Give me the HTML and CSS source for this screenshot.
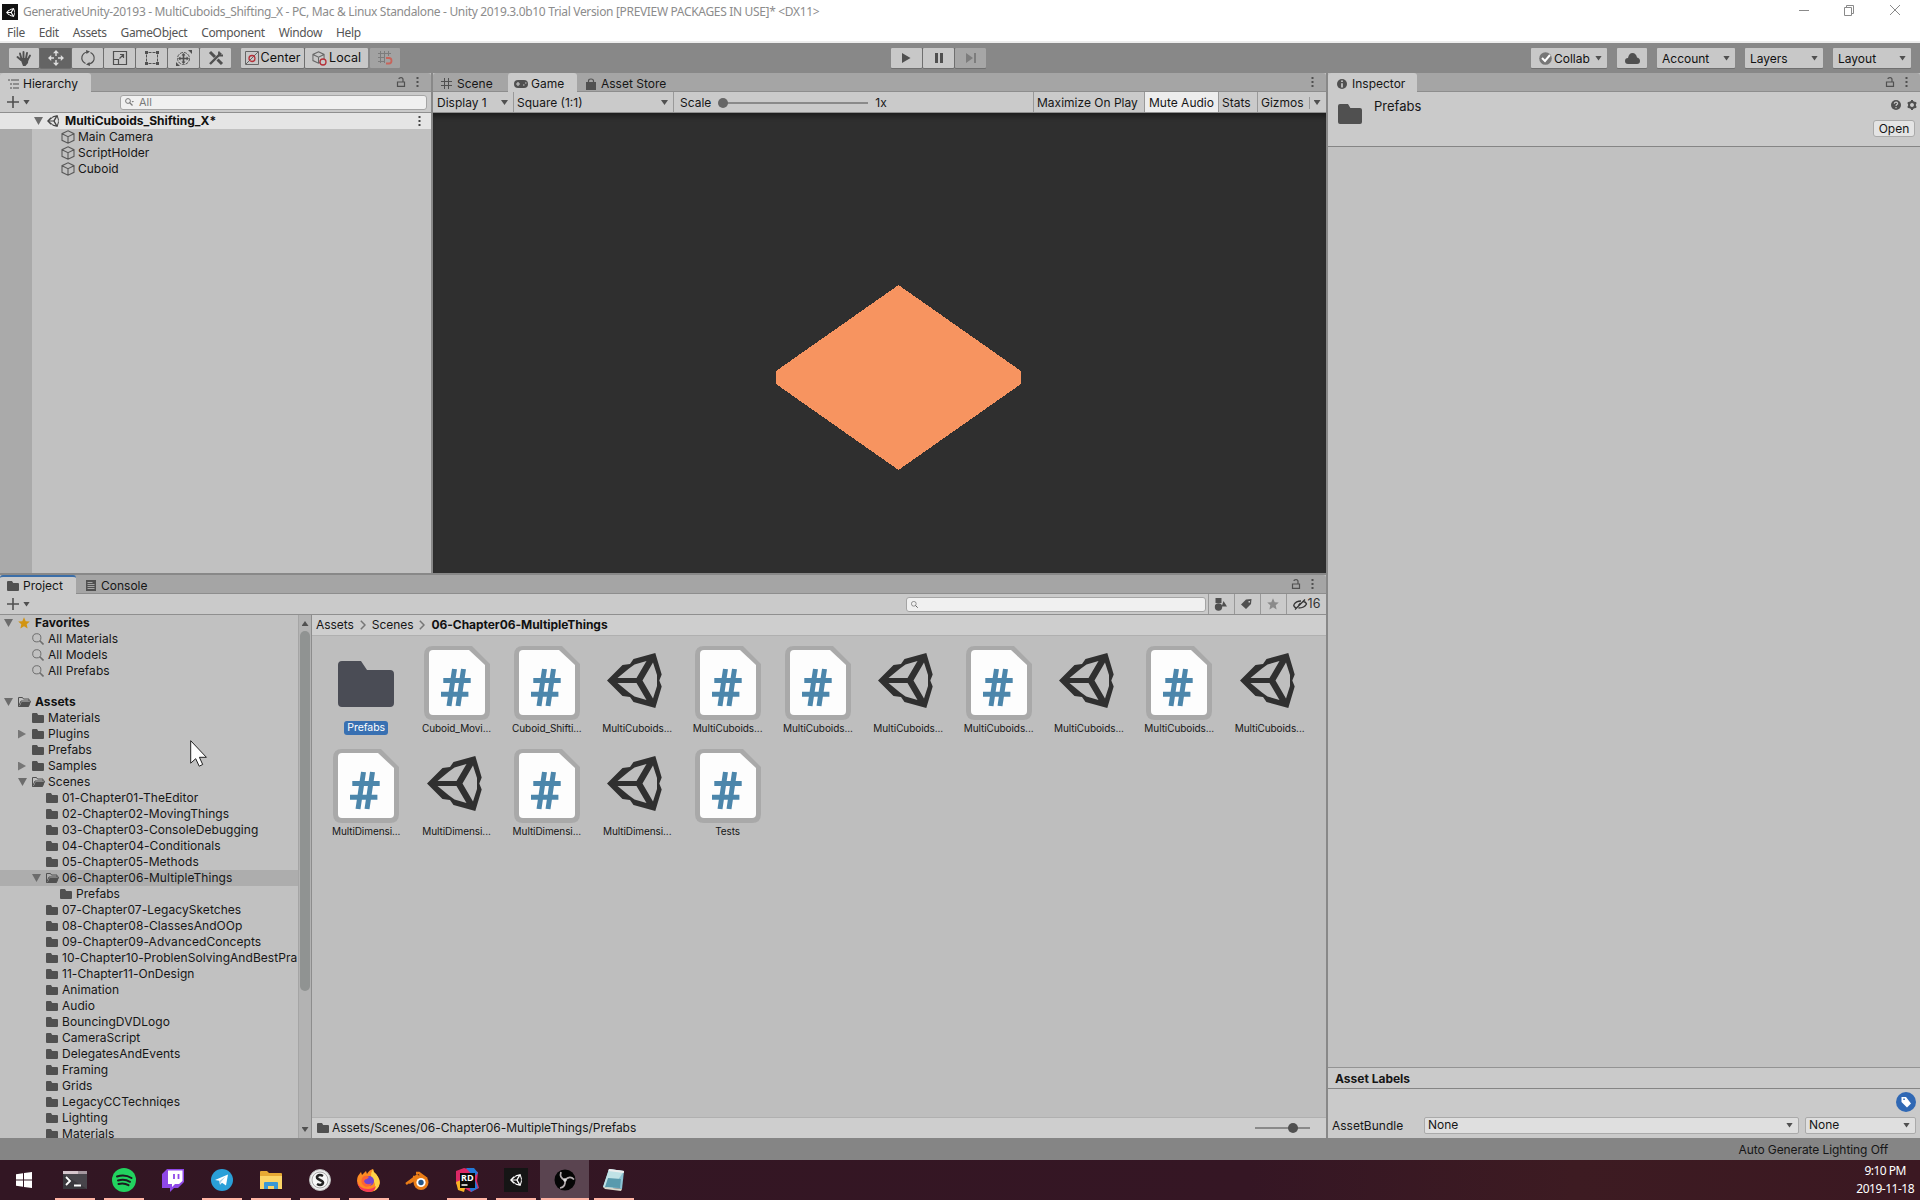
FILE: index.html
```html
<!DOCTYPE html>
<html lang="en">
<head>
<meta charset="utf-8">
<title>GenerativeUnity-20193 - Unity</title>
<link rel="stylesheet" href="styles.css">
</head>
<body>
<svg class="defs" aria-hidden="true">
  <symbol id="unity" viewBox="0 0 55 55"><path fill-rule="evenodd" d="M0 27.500 15.500 12l7.500-1 3.500-5L48.300 0l6.400 21.500L52.300 27.500l2.400 6L48.300 55 26.500 49 23 44l-7.500-1zM10.500 25H29.500L39.500 8 27.500 11.500 22 15.500zM10.500 30 22 39.500 27.500 43.500 39.500 47 29.500 30zM46 9.500 35.500 27.500 46 45.500 50 33 50 22z"/></symbol>
  <symbol id="folder" viewBox="0 0 12 10"><path d="M0 1q0-1 1-1h4l1.200 2H11q1 0 1 1v6q0 1-1 1H1q-1 0-1-1z"/></symbol>
  <symbol id="folder-open" viewBox="0 0 13 10"><path d="M.5 9.500V.5h4l1 1.500h5.500v2M.5 9.500 3 4h9.500l-2 5.500z" fill="none" stroke="currentColor"/><path d="M1.500 9.500 3.500 5h9L10.500 9.500z"/></symbol>
  <symbol id="cube" viewBox="0 0 14 14"><path d="M7 .8 13 3.700v6.600L7 13.200 1 10.300V3.700zM1 3.700l6 3 6-3M7 6.700v6.500" fill="none" stroke="currentColor" stroke-width="1.100"/></symbol>
  <symbol id="search" viewBox="0 0 12 12"><path d="m7.800 7.800 3.700 3.700" stroke="currentColor" stroke-width="1.600"/><circle cx="4.800" cy="4.800" r="4.100" fill="none" stroke="currentColor"/></symbol>
  <symbol id="lock" viewBox="0 0 10 10"><path d="M1.500 5h7v4.300h-7zM7 5V2.500Q7 .7 5 .7T3 2" fill="none" stroke="currentColor" stroke-width="1.200"/></symbol>
  <symbol id="dots" viewBox="0 0 3 10"><path d="M.5 0h2v2h-2zm0 4h2v2h-2zm0 4h2v2h-2z"/></symbol>
  <symbol id="plus" viewBox="0 0 12 12"><path d="M0 5.200h12v1.600H0zM5.200 0h1.600v12H5.200z"/></symbol>
  <symbol id="chevron" viewBox="0 0 6 10"><path d="M.8.800 5 5 .8 9.200" fill="none" stroke="#777" stroke-width="1.500"/></symbol>
  <symbol id="star" viewBox="0 0 12 12"><path d="m6 .3 1.700 3.900 4.100.4-3.100 2.700.9 4.200L6 9.300l-3.600 2.200.9-4.200L.2 4.600l4.100-.4z"/></symbol>
  <symbol id="script" viewBox="0 0 66 74"><path d="M9 0h39l18 18v47q0 9-9 9H9q-9 0-9-9V9q0-9 9-9z" fill="#a9a9a9"/><path d="M9 4h36l16 15v46q0 4-4 4H9q-4 0-4-4V8q0-4 4-4z" fill="#fdfdfd"/><path d="M30.500 23 25 60M39.500 23 34 60M19.300 34.500h27.400M17 48.300h27.400" stroke="#4c86ab" stroke-width="5" fill="none"/></symbol>
  <symbol id="move" viewBox="0 0 16 16"><path d="M8 0l3 3.200H5zM8 16l-3-3.200h6zM0 8l3.200-3v6zM16 8l-3.200 3V5z"/><path d="M8 2v4M8 10v4M2 8h4M10 8h4" stroke="currentColor" stroke-width="1.400"/></symbol>
</svg>

<header class="window-head">
  <div class="titlebar">
    <span class="app-icon"><svg width="9" height="9" fill="#fff"><use href="#unity"/></svg></span>
    <span class="title">GenerativeUnity-20193 - MultiCuboids_Shifting_X - PC, Mac &amp; Linux Standalone - Unity 2019.3.0b10 Trial Version [PREVIEW PACKAGES IN USE]* &lt;DX11&gt;</span>
    <svg class="win-controls" width="102" height="12" fill="none" stroke="#8a8a8a"><path d="M0 6.500h10M45.500 3.500h7v8h-7zM47.500 3.500v-2h7v8h-2M91 1l10 10M101 1 91 11"/></svg>
  </div>
  <nav class="menubar"><span>File</span><span>Edit</span><span>Assets</span><span>GameObject</span><span>Component</span><span>Window</span><span>Help</span></nav>
</header>

<div class="toolbar">
  <div class="group tools">
    <span class="btn"><svg width="14" height="15" viewBox="0 0 14 15"><path d="M4 9 .5 6M4.500 8 3 2.500M6.500 7V1M9 7.500 10 2M10.500 9l2.500-4.500" stroke="currentColor" stroke-width="1.900" stroke-linecap="round"/><path d="M3 7h8.500L11 12l-2.500 3H6z"/></svg></span>
    <span class="btn on"><svg width="16" height="16"><use href="#move"/></svg></span>
    <span class="btn"><svg width="16" height="16" viewBox="0 0 16 16"><path d="M5.500 13.500Q1 11 2 6.500 3 3 7 2M10.500 2.500Q15 5 14 9.500 13 13 9 14" fill="none" stroke="currentColor" stroke-width="1.200"/><path d="M6 0l4 1.500L6.500 4zM10 16l-4-1.500L9.500 12z"/></svg></span>
    <span class="btn"><svg width="14" height="14" viewBox="0 0 14 14" fill="none" stroke="currentColor"><path d="M.5.500h13v13H.5zM.5 8.500h5v5M6.500 7.500l4-4M7 3.500h3.500V7" stroke-width="1.200"/></svg></span>
    <span class="btn"><svg width="14" height="14" viewBox="0 0 14 14"><path d="M0 0h3v3H0zM11 0h3v3h-3zM0 11h3v3H0zM11 11h3v3h-3z"/><path d="M3.500 1.500h7M3.500 12.500h7M1.500 3.500v7M12.500 3.500v7" stroke="currentColor" stroke-dasharray="3 1"/></svg></span>
    <span class="btn"><svg width="16" height="16" viewBox="0 0 16 16"><circle cx="7.500" cy="8.500" r="6" fill="none" stroke="currentColor" stroke-dasharray="3 1"/><path d="M7.500 4v9M3 8.500h9" stroke="currentColor" stroke-width="1.600"/><path d="M7.500 3l2 2.500h-4zM7.500 14l-2-2.500h4zM2 8.500l2.500-2v4zM13 8.500l-2.500 2v-4zM12 0h4v4zM0 12v4h4z"/></svg></span>
    <span class="btn"><svg width="16" height="16" viewBox="0 0 16 16" stroke="currentColor" fill="none"><path d="M2 2l5 5M9.500 9.500 14 14" stroke-width="3"/><path d="M2 14 13 3" stroke-width="2.400"/><path d="M11 1.500v4h4" stroke-width="1.800"/></svg></span>
  </div>
  <div class="group pivots">
    <span class="btn pivot"><svg width="14" height="14" viewBox="0 0 14 14" fill="none"><path d="M.5.500h13v13H.5zM1 13 13 1" stroke="#666"/><circle cx="7" cy="7.500" r="3" stroke="#b53038" stroke-width="1.300"/></svg>Center</span>
    <span class="btn pivot"><svg width="15" height="15" viewBox="0 0 15 15"><use href="#cube" width="13" height="13"/><circle cx="11" cy="11" r="3" fill="#c8c8c8" stroke="#b53038" stroke-width="1.300"/></svg>Local</span>
  </div>
  <span class="btn snap"><svg width="14" height="14" viewBox="0 0 14 14" fill="none"><path d="M2.500 0v12M6.500 0v12M10.500 0v5M0 2.500h13M0 6.500h7M0 10.500h6" stroke="#7c7c7c"/><path d="M8 7h3q2.500 0 2.500 2.700T11 12.500H8" stroke="#c8645a" stroke-width="1.800"/></svg></span>
  <div class="group play">
    <span class="btn"><svg width="9" height="10"><path d="M0 0l8.500 5L0 10z"/></svg></span>
    <span class="btn"><svg width="8" height="10"><path d="M0 0h3v10H0zM5 0h3v10H5z"/></svg></span>
    <span class="btn dis"><svg width="10" height="10"><path d="M0 0l7 5-7 5zM8 0h2v10H8z"/></svg></span>
  </div>
  <div class="account">
    <span class="btn drop collab"><svg width="13" height="13" viewBox="0 0 13 13"><circle cx="6.500" cy="6.500" r="6.300" fill="#777"/><path d="m3 6 3 3 5-6" fill="none" stroke="#fff" stroke-width="2"/></svg><b>Collab</b><i class="tri"></i></span>
    <span class="btn cloud"><svg width="15" height="11" viewBox="0 0 15 11"><path d="M3 11q-3 0-3-3t3-3Q4 0 7.500 0T12 4.500q3 .5 3 3.500t-3 3z"/></svg></span>
    <span class="btn drop"><b>Account</b><i class="tri"></i></span>
    <span class="btn drop"><b>Layers</b><i class="tri"></i></span>
    <span class="btn drop"><b>Layout</b><i class="tri"></i></span>
  </div>
</div>

<main class="editor">
  <div class="left-area">
    <div class="top-area">
      <section class="panel hierarchy">
        <div class="tabs">
          <span class="tab active"><svg width="11" height="10" viewBox="0 0 11 10"><path d="M0 1h2M3 1h8M2 5h2M5 5h6M2 9h2M5 9h6" stroke="currentColor" stroke-width="1.200"/></svg>Hierarchy</span>
          <span class="tab-tools"><svg width="10" height="10"><use href="#lock"/></svg><svg width="3" height="10"><use href="#dots"/></svg></span>
        </div>
        <div class="bar"><svg class="add" width="12" height="12"><use href="#plus"/></svg><i class="tri"></i>
          <span class="field all"><svg width="9" height="8" viewBox="0 0 9 8"><circle cx="3" cy="3" r="2.400" fill="none" stroke="currentColor"/><path d="m4.500 4.500 3 3" stroke="currentColor" stroke-width="1.300"/><path d="M6.500 3H9L7.800 4.500z"/></svg>All</span>
        </div>
        <div class="scene-row"><i class="tri big"></i><svg width="12" height="12"><use href="#unity"/></svg><strong>MultiCuboids_Shifting_X*</strong><svg class="menu" width="3" height="10"><use href="#dots"/></svg></div>
        <div class="objects">
          <div><svg width="14" height="14"><use href="#cube"/></svg>Main Camera</div>
          <div><svg width="14" height="14"><use href="#cube"/></svg>ScriptHolder</div>
          <div><svg width="14" height="14"><use href="#cube"/></svg>Cuboid</div>
        </div>
      </section>
      <section class="panel game">
        <div class="tabs">
          <span class="tab scene-tab"><svg width="11" height="11" viewBox="0 0 11 11"><path d="M3.500 0v11M7.500 0v11M0 3.500h11M0 7.500h11" stroke="currentColor"/></svg>Scene</span>
          <span class="tab active game-tab"><svg width="14" height="8" viewBox="0 0 14 8"><rect width="14" height="8" rx="4"/><path d="M2 4h4M4 2v4M9 5h1.500M11 3h1.500" stroke="#c8c8c8" stroke-width="1.200"/></svg>Game</span>
          <span class="tab store-tab"><svg width="10" height="12" viewBox="0 0 10 12"><path d="M0 4h10v8H0z"/><path d="M2.500 5V3q0-2 2.500-2t2.500 2v2" fill="none" stroke="currentColor" stroke-width="1.200"/></svg>Asset Store</span>
          <span class="tab-tools"><svg width="3" height="10"><use href="#dots"/></svg></span>
        </div>
        <div class="bar game-bar">
          <span class="cell display">Display 1<i class="tri"></i></span>
          <span class="cell aspect">Square (1:1)<i class="tri"></i></span>
          <span class="scale">Scale<svg width="150" height="10"><path d="M5 5h145" stroke="#8a8a8a" stroke-width="2"/><circle cx="5" cy="5" r="5"/></svg>1x</span>
          <span class="opt maximize">Maximize On Play</span><span class="opt mute">Mute Audio</span><span class="opt stats">Stats</span><span class="opt gizmos">Gizmos<em></em><i class="tri"></i></span>
        </div>
        <div class="viewport"><svg width="893" height="460" viewBox="433 113 893 460"><path d="M898.500 285 1021 371v13l-122.500 86L776 384v-13z" fill="#f79460" shape-rendering="crispEdges"/></svg></div>
      </section>
    </div>
    <section class="panel project">
      <div class="tabs">
        <span class="tab active project-tab"><svg width="12" height="10"><use href="#folder"/></svg>Project</span>
        <span class="tab console-tab"><svg width="10" height="11" viewBox="0 0 10 11"><path d="M0 0h10v11H0z"/><path d="M1.500 2.500h5M1.500 4.500h7M1.500 6.500h7M1.500 8.500h7" stroke="#a5a5a5"/></svg>Console</span>
        <span class="tab-tools"><svg width="10" height="10"><use href="#lock"/></svg><svg width="3" height="10"><use href="#dots"/></svg></span>
      </div>
      <div class="bar project-bar"><svg class="add" width="12" height="12"><use href="#plus"/></svg><i class="tri"></i>
        <span class="field find"><svg width="7" height="7"><use href="#search"/></svg></span>
        <span class="filter"><svg width="13" height="13" viewBox="0 0 13 13"><path d="M1.500 0h6v5h-6zM8 7.500 9.500 3l3.500 5.500H8z"/><circle cx="4.500" cy="9" r="3.700"/></svg></span>
        <span class="filter"><svg width="11" height="10" viewBox="0 0 11 10"><path fill-rule="evenodd" d="m0 5.500 5-5L10.500 0 10 5 5 10zM7.500 2v1.500H9V2z"/></svg></span>
        <span class="filter faint"><svg width="12" height="12"><use href="#star"/></svg></span>
        <span class="filter hidden-count"><svg width="14" height="11" viewBox="0 0 14 11" fill="none" stroke="currentColor"><path d="M3 9Q0 7 1 5.500 3 2 8 2M10.500 2.500q2.500.5 3 2.500-2 4-8 4M2 10.500 12 .5M5.500 6.500 7.500 4" stroke-width="1.300"/></svg>16</span>
      </div>
      <div class="project-body">
        <div class="tree">
          <div class="row fav"><i class="tri big"></i><svg class="gold" width="12" height="12"><use href="#star"/></svg><strong>Favorites</strong></div>
          <div class="row q"><svg width="12" height="12"><use href="#search"/></svg>All Materials</div>
          <div class="row q"><svg width="12" height="12"><use href="#search"/></svg>All Models</div>
          <div class="row q"><svg width="12" height="12"><use href="#search"/></svg>All Prefabs</div>
          <div class="row assets"><i class="tri big"></i><svg width="13" height="10"><use href="#folder-open"/></svg><strong>Assets</strong></div>
          <div class="row l1"><svg width="12" height="10"><use href="#folder"/></svg>Materials</div>
          <div class="row l1 has"><i class="tri side"></i><svg width="12" height="10"><use href="#folder"/></svg>Plugins</div>
          <div class="row l1"><svg width="12" height="10"><use href="#folder"/></svg>Prefabs</div>
          <div class="row l1 has"><i class="tri side"></i><svg width="12" height="10"><use href="#folder"/></svg>Samples</div>
          <div class="row l1 has"><i class="tri big"></i><svg width="13" height="10"><use href="#folder-open"/></svg><span class="tight">Scenes</span></div>
          <div class="row l2"><svg width="12" height="10"><use href="#folder"/></svg>01-Chapter01-TheEditor</div>
          <div class="row l2"><svg width="12" height="10"><use href="#folder"/></svg>02-Chapter02-MovingThings</div>
          <div class="row l2"><svg width="12" height="10"><use href="#folder"/></svg>03-Chapter03-ConsoleDebugging</div>
          <div class="row l2"><svg width="12" height="10"><use href="#folder"/></svg>04-Chapter04-Conditionals</div>
          <div class="row l2"><svg width="12" height="10"><use href="#folder"/></svg>05-Chapter05-Methods</div>
          <div class="row l2 has selected"><i class="tri big"></i><svg width="13" height="10"><use href="#folder-open"/></svg><span class="tight">06-Chapter06-MultipleThings</span></div>
          <div class="row l3"><svg width="12" height="10"><use href="#folder"/></svg>Prefabs</div>
          <div class="row l2"><svg width="12" height="10"><use href="#folder"/></svg>07-Chapter07-LegacySketches</div>
          <div class="row l2"><svg width="12" height="10"><use href="#folder"/></svg>08-Chapter08-ClassesAndOOp</div>
          <div class="row l2"><svg width="12" height="10"><use href="#folder"/></svg>09-Chapter09-AdvancedConcepts</div>
          <div class="row l2"><svg width="12" height="10"><use href="#folder"/></svg>10-Chapter10-ProblenSolvingAndBestPra</div>
          <div class="row l2"><svg width="12" height="10"><use href="#folder"/></svg>11-Chapter11-OnDesign</div>
          <div class="row l2"><svg width="12" height="10"><use href="#folder"/></svg>Animation</div>
          <div class="row l2"><svg width="12" height="10"><use href="#folder"/></svg>Audio</div>
          <div class="row l2"><svg width="12" height="10"><use href="#folder"/></svg>BouncingDVDLogo</div>
          <div class="row l2"><svg width="12" height="10"><use href="#folder"/></svg>CameraScript</div>
          <div class="row l2"><svg width="12" height="10"><use href="#folder"/></svg>DelegatesAndEvents</div>
          <div class="row l2"><svg width="12" height="10"><use href="#folder"/></svg>Framing</div>
          <div class="row l2"><svg width="12" height="10"><use href="#folder"/></svg>Grids</div>
          <div class="row l2"><svg width="12" height="10"><use href="#folder"/></svg>LegacyCCTechniqes</div>
          <div class="row l2"><svg width="12" height="10"><use href="#folder"/></svg>Lighting</div>
          <div class="row l2"><svg width="12" height="10"><use href="#folder"/></svg>Materials</div>
        </div>
        <div class="scrollbar"><i class="tri up"></i><div class="thumb"></div><i class="tri"></i></div>
        <div class="browser">
          <div class="crumbs"><span>Assets</span><svg width="6" height="10"><use href="#chevron"/></svg><span>Scenes</span><svg width="6" height="10"><use href="#chevron"/></svg><strong>06-Chapter06-MultipleThings</strong></div>
          <div class="grid">
            <div class="item"><svg class="big-folder" width="56" height="46" viewBox="0 0 56 46"><path d="M0 4q0-4 4-4h19l6 9h23q4 0 4 4v29q0 4-4 4H4q-4 0-4-4z" fill="#4a4c55"/></svg><span class="picked">Prefabs</span></div>
            <div class="item"><svg class="doc"><use href="#script"/></svg><span>Cuboid_Movi...</span></div>
            <div class="item"><svg class="doc"><use href="#script"/></svg><span>Cuboid_Shifti...</span></div>
            <div class="item"><svg class="logo"><use href="#unity"/></svg><span>MultiCuboids...</span></div>
            <div class="item"><svg class="doc"><use href="#script"/></svg><span>MultiCuboids...</span></div>
            <div class="item"><svg class="doc"><use href="#script"/></svg><span>MultiCuboids...</span></div>
            <div class="item"><svg class="logo"><use href="#unity"/></svg><span>MultiCuboids...</span></div>
            <div class="item"><svg class="doc"><use href="#script"/></svg><span>MultiCuboids...</span></div>
            <div class="item"><svg class="logo"><use href="#unity"/></svg><span>MultiCuboids...</span></div>
            <div class="item"><svg class="doc"><use href="#script"/></svg><span>MultiCuboids...</span></div>
            <div class="item"><svg class="logo"><use href="#unity"/></svg><span>MultiCuboids...</span></div>
            <div class="item"><svg class="doc"><use href="#script"/></svg><span>MultiDimensi...</span></div>
            <div class="item"><svg class="logo"><use href="#unity"/></svg><span>MultiDimensi...</span></div>
            <div class="item"><svg class="doc"><use href="#script"/></svg><span>MultiDimensi...</span></div>
            <div class="item"><svg class="logo"><use href="#unity"/></svg><span>MultiDimensi...</span></div>
            <div class="item"><svg class="doc"><use href="#script"/></svg><span>Tests</span></div>
          </div>
          <div class="path"><svg width="12" height="10"><use href="#folder"/></svg>Assets/Scenes/06-Chapter06-MultipleThings/Prefabs<svg class="zoomer" width="55" height="10"><path d="M0 5h55" stroke="#8a8a8a" stroke-width="2"/><circle cx="38" cy="5" r="5"/></svg></div>
        </div>
      </div>
    </section>
  </div>
  <aside class="panel inspector">
    <div class="tabs">
      <span class="tab active"><svg width="10" height="10" viewBox="0 0 10 10"><circle cx="5" cy="5" r="5"/><path d="M5 1.500v1.600M5 4.200v4.300" stroke="#c8c8c8" stroke-width="1.700"/></svg>Inspector</span>
      <span class="tab-tools"><svg width="10" height="10"><use href="#lock"/></svg><svg width="3" height="10"><use href="#dots"/></svg></span>
    </div>
    <div class="asset-head">
      <svg class="asset-icon" width="24" height="20"><use href="#folder"/></svg><span class="asset-name">Prefabs</span>
      <div class="asset-actions">
        <div class="mini"><svg width="10" height="10" viewBox="0 0 10 10"><circle cx="5" cy="5" r="5"/><path d="M3.300 3.800Q3.500 2 5.200 2.200 7 2.500 6.500 4 5 4.700 5 6M5 7v1.300" stroke="#c8c8c8" stroke-width="1.200" fill="none"/></svg><svg width="10" height="10" viewBox="0 0 10 10"><circle cx="5" cy="5" r="3" fill="none" stroke="currentColor" stroke-width="2"/><path d="M5 0v2.500M5 7.500V10M.7 2.500 3 3.800M7 6.200l2.300 1.300M.7 7.500 3 6.200M7 3.800l2.300-1.300" stroke="currentColor" stroke-width="2"/></svg></div>
        <span class="open">Open</span>
      </div>
    </div>
    <div class="inspector-body"></div>
    <div class="labels-title">Asset Labels</div>
    <div class="labels-body">
      <svg class="tag" width="20" height="20" viewBox="0 0 20 20"><circle cx="10" cy="10" r="10" fill="#3068b4"/><path fill-rule="evenodd" d="M5.500 5h4.500l5 6.500-4 4L5.500 10zM7.300 6.500v1.500h1.500V6.500z" fill="#fff"/></svg>
      <div class="bundle"><span>AssetBundle</span><span class="select wide">None<i class="tri"></i></span><span class="select">None<i class="tri"></i></span></div>
    </div>
  </aside>
</main>
<div class="status">Auto Generate Lighting Off</div>

<footer class="taskbar">
  <span class="app plain"><svg width="16" height="16" viewBox="0 0 16 16" fill="#fff"><path d="M0 2.200 7 1.200v6.300H0zM8 1l8-1v7.500H8zM0 8.500h7v6.300l-7-1zM8 8.500h8V16l-8-1z"/></svg></span>
  <span class="app run"><svg width="24" height="18" viewBox="0 0 24 18"><path d="M0 0h24v18H0z" fill="#48454b"/><path d="M0 0h24v3H0z" fill="#a5979f"/><path d="M0 0h15v3H0z" fill="#d5c5cc"/><path d="M0 3 24 18H0z" fill="#3a383d"/><path d="m3 6 4 4-4 4M11 14.500h7" fill="none" stroke="#fff" stroke-width="1.800"/></svg></span>
  <span class="app run"><svg width="24" height="24" viewBox="0 0 24 24"><circle cx="12" cy="12" r="12" fill="#22d35f"/><path d="M5 8.500q8-2.500 14.500 1.500M6 12.500q6.500-2 12 1.300M6.500 16q5.500-1.500 10 1.200" fill="none" stroke="#1c1b20" stroke-width="2" stroke-linecap="round"/></svg></span>
  <span class="app"><svg width="22" height="23" viewBox="0 0 22 23"><path d="M0 5 5 0h17v13l-6 6h-4l-4 4v-4H0z" fill="#8f48e8"/><path d="M6 1.500h14.500V12L17 15h-4l-3 3v-3H6z" fill="#fff"/><path d="M12 5v5M16.500 5v5" stroke="#8f48e8" stroke-width="1.800"/></svg></span>
  <span class="app run"><svg width="22" height="22" viewBox="0 0 22 22"><circle cx="11" cy="11" r="11" fill="#2a9fd8"/><path d="m4 11 13-5.500-2 11-4-2.700-2 2-.8-4z" fill="#fff"/><path d="m8.500 12 6-4.500-4.500 5.500-1 2.500z" fill="#a7cfe5"/></svg></span>
  <span class="app run explorer"><svg width="22" height="18" viewBox="0 0 22 18"><path d="M0 1q0-1 1-1h6l2 2h12q1 0 1 1v14H0z" fill="#e6a934"/><path d="M0 5h22v13H0z" fill="#fbd567"/><path d="M4 18v-6q0-1 1-1h12q1 0 1 1v6h-4v-3H8v3z" fill="#3a98d5"/></svg></span>
  <span class="app run"><svg width="22" height="22" viewBox="0 0 22 22"><circle cx="11" cy="11" r="10.500" fill="#eee" stroke="#bbb"/><circle cx="11" cy="11" r="8" fill="#f8f8f8" stroke="#aaa"/><path d="M14 7Q10.500 5 8.500 7t2.500 4 2.500 4-5.500 0" fill="none" stroke="#222" stroke-width="2.500"/></svg></span>
  <span class="app run"><svg width="23" height="23" viewBox="0 0 23 23"><path d="M1 7 4 3l1 3 4-4 1 3Q12 1 16 0q0 3 3 5 4 5 4 9-2 9-11.500 9Q1 22 0 12q0-3 1-5z" fill="#ff8b22"/><path d="M16 0q0 3 3 5 5 6 3 12-2 4-5 5 3-8-3-14 0-5 2-8z" fill="#ffd347"/><path d="M0 12q2 8 11 8 5 0 8-3-1 6-8 6Q1 22 0 12z" fill="#f53b58"/><circle cx="12" cy="12" r="5" fill="#7344cf"/><path d="M5 9q3-4 7-1l-2 2q-3 0-3 3 3 4 8 1-3 5-7 3.500Q3 15 5 9z" fill="#ff6335"/></svg></span>
  <span class="app"><svg width="23" height="19" viewBox="0 0 23 19"><path d="M10 2h3l8 6M7 6h8M0 13l12-9M3 12l7-4" stroke="#ea7d17" stroke-width="2.500" fill="none"/><circle cx="15" cy="11.500" r="7.500" fill="#ea7d17"/><circle cx="15" cy="11.500" r="4.600" fill="#fff"/><circle cx="15" cy="11.500" r="2.700" fill="#265787"/></svg></span>
  <span class="app run"><svg width="24" height="24" viewBox="0 0 24 24"><path d="M1 3 9 0l8 2 6 2-1 9 2 7-8 4-7-4-8-4z" fill="#dc2866"/><path d="M11 0h8l4 5-4 4z" fill="#2279d8"/><path d="m1 14 5-2 5 5-2 7-6-2z" fill="#f7b323"/><path d="m14 18 6-6 3 8-7 4z" fill="#2179d7"/><path d="M5 5h15v15H5z" fill="#090909"/><path d="M6.500 17h6" stroke="#fff" stroke-width="1.500"/><text x="6" y="13" class="rd">RD</text></svg></span>
  <span class="app run"><svg width="24" height="24"><path d="M0 0h24v24H0z" fill="#151515"/><use href="#unity" x="6" y="6" width="12" height="12" fill="#fff"/></svg></span>
  <span class="app run active"><svg width="22" height="22" viewBox="0 0 22 22"><circle cx="11" cy="11" r="10.500" fill="#050505"/><path d="M11 11Q5 9 7 3M11 11q5-5 9-.5M11 11q1 7-5 8" fill="none" stroke="#b5aeb1" stroke-width="1.700"/><circle cx="11" cy="11" r="1.800" fill="#ddd"/></svg></span>
  <span class="app run"><svg width="22" height="22" viewBox="0 0 22 22"><path d="m6 0 15 2-2 18L0 18z" fill="#8bc2d3"/><path d="M6 0 21 2 9 20 0 18z" fill="#c0e2e6"/><path d="m5 9 13 1-1 9-15-1z" fill="#599aad"/><path d="m6 0 15 2-.2 2L5.500 2z" fill="#eee"/><path d="m0 18 19 2-1 2L2 20z" fill="#d8d8cb"/></svg></span>
  <div class="clock"><span>9:10 PM</span><span>2019-11-18</span></div>
</footer>
<svg class="cursor" width="18" height="27" viewBox="0 0 18 27"><path d="M.7.700v22.500l5-4.500 3.500 7.500 3.500-1.700-3.300-7.200h7z" fill="#fff" stroke="#222"/></svg>
</body>
</html>
```
FILE: styles.css
```css
* { box-sizing: border-box; }
body { margin: 0; width: 1920px; height: 1200px; overflow: hidden; display: flex; flex-direction: column; background: #888; color: #161616; font: 12px/16px Inter, sans-serif; white-space: nowrap; }
svg { display: block; flex: none; overflow: visible; }
svg:not([fill]) { fill: currentColor; }
.defs { position: absolute; width: 0; height: 0; }
strong { font-weight: 700; color: #111; }

/* window frame */
.window-head { height: 43px; background: #fff; border-bottom: 2px solid #ededed; font-family: "Noto Sans", sans-serif; letter-spacing: -0.330px; flex: none; }
.titlebar { height: 23px; display: flex; align-items: center; padding: 1px 19px 0 2px; color: #8c8c8c; }
.app-icon { width: 16px; height: 16px; background: #111; display: grid; place-items: center; margin-right: 5px; }
.win-controls { margin: -4px 0 0 auto; }
.menubar { display: flex; gap: 13.800px; padding: 2px 7px; height: 18px; line-height: 16px; color: #555; }

/* main toolbar */
.toolbar { height: 30px; display: flex; align-items: center; padding: 0 9px; flex: none; }
.group { display: flex; gap: 1px; background: #6f6f6f; }
.btn { height: 20px; width: 31px; background: #c8c8c8; display: flex; align-items: center; justify-content: center; color: #505050; border-radius: 1px; box-shadow: 0 1px 0 #707070; }
.btn.on { background: #646464; color: #dedede; }
.tools .btn:first-child { width: 30px; }
.pivots { margin-left: 10px; }
.btn.pivot { width: 63px; gap: 2px; color: #111; font-size: 12.500px; }
.pivot svg { color: #666; }
.snap { margin-left: 2px; width: 30px; background: #a2a2a2; box-shadow: none; }
.play { margin-left: 491px; }
.btn.dis { background: #a6a6a6; color: #7d7d7d; }
.account { margin-left: auto; display: flex; gap: 10px; }
.btn.drop { width: 78px; padding: 0 5px; color: #111; justify-content: flex-start; }
.drop b { font-weight: 400; padding-top: 1px; }
.drop .tri { margin-left: auto; }
.btn.collab { width: 76px; padding-left: 8px; gap: 2px; }
.btn.cloud { width: 30px; }
.tri { width: 7px; height: 5px; background: #505050; clip-path: polygon(0 0, 100% 0, 50% 100%); flex: none; }
.tri.big { width: 9px; height: 8px; background: #6c6c6c; }
.tri.side { width: 8px; height: 9px; background: #777; clip-path: polygon(0 0, 100% 50%, 0 100%); }
.tri.up { clip-path: polygon(50% 0, 100% 100%, 0 100%); }

/* panels */
.editor { height: 1065px; display: flex; gap: 2px; flex: none; }
.left-area { width: 1326px; display: flex; flex-direction: column; gap: 2px; }
.top-area { height: 500px; display: flex; gap: 2px; }
.panel { display: flex; flex-direction: column; background: #c1c1c1; overflow: hidden; }
.hierarchy { width: 431px; }
.game { width: 893px; }
.tabs { height: 19px; background: #a5a5a5; border-bottom: 1px solid #8d8d8d; display: flex; flex: none; border-radius: 3px 3px 0 0; }
.tab { height: 19px; display: flex; align-items: center; padding: 2px 0 0 8px; }
.tab svg, .tab-tools, .bar > svg { color: #505050; }
.tab.active { background: #cacaca; border-radius: 3px 3px 0 0; }
.hierarchy .tab { width: 91px; gap: 4px; }
.tab-tools { margin-left: auto; display: flex; align-items: center; gap: 10px; padding-right: 12px; }
.bar { height: 21px; background: #cacaca; border-bottom: 1px solid #8f8f8f; display: flex; align-items: center; flex: none; }
.add { margin: 0 5px 0 7px; }
.bar > .add + .tri { margin-left: -1px; }
.field { height: 15px; background: #f0f0f0; border: 1px solid #a5a5a5; border-radius: 3px; display: flex; align-items: center; color: #555; }
.all { width: 307px; margin-left: 90px; padding-left: 4px; gap: 5px; font-size: 11px; color: #7a7a7a; }
.scene-row { height: 16px; background: #e5e5e5; display: flex; align-items: center; padding: 0 11px 0 34px; flex: none; }
.scene-row svg { color: #444; margin: 0 6px 0 4px; }
.scene-row .menu { margin: 0 -1px 0 auto; }
.objects { flex: 1; border-left: 32px solid #aaa; }
.objects div { display: flex; align-items: center; gap: 3px; height: 16px; padding-left: 29px; }
.objects svg { color: #5a5a5a; }
.scene-tab { width: 75px; gap: 5px; }
.game-tab { width: 69px; gap: 3px; padding-left: 6px; }
.store-tab { gap: 5px; padding-left: 9px; }
.game-bar > span { height: 20px; display: flex; align-items: center; padding-top: 1px; }
.cell { border-right: 1px solid #999; padding: 0 5px 0 4px; justify-content: space-between; }
.game-bar .aspect { padding-left: 3px; }
.display { width: 81px; }
.aspect { width: 160px; }
.scale { padding-left: 6px; gap: 7px; width: 359px; }
.scale svg { color: #666; }
.opt { border-left: 1px solid #999; padding-left: 3px; }
.maximize { width: 111px; }
.mute { width: 74px; background: #ededed; padding-left: 4px; }
.stats { width: 39px; }
.gizmos { flex: 1; gap: 5px; }
.gizmos em { width: 1px; height: 12px; background: #999; }
.gizmos .tri { margin-left: -1px; }
.viewport { height: 460px; background: #2f2f2f; box-shadow: inset 0 6px 5px -3px #1d1d1d; }

/* project panel */
.project { flex: 1; }
.project-tab { width: 76px; gap: 4px; padding-left: 7px; border-top: 2px solid #3b6ea8; padding-top: 0; }
.console-tab { padding-left: 10px; gap: 5px; }
.find { width: 300px; margin-left: 876px; padding-left: 4px; }
.filter { width: 26px; height: 20px; border-left: 1px solid #999; display: flex; align-items: center; justify-content: center; color: #505050; padding-right: 2px; }
.find + .filter { margin-left: 2px; }
.filter.faint { color: #8a8a8a; }
.filter.hidden-count { width: 40px; font-size: 12.500px; gap: 1px; padding-right: 0; color: #333; }
.project-body { flex: 1; display: flex; min-height: 0; }
.tree { width: 298px; overflow: hidden; letter-spacing: 0.050px; }
.row { height: 16px; display: flex; align-items: center; gap: 4px; }
.row svg { color: #505050; }
.row .gold { color: #d29412; }
.fav { padding-left: 4px; gap: 5px; }
.assets { margin-top: 15px; padding-left: 4px; gap: 4.500px; }
.q { padding-left: 32px; }
.row.q svg { color: #6e6e6e; }
.l1 { padding-left: 32px; }
.l1.has { padding-left: 18px; }
.l2 { padding-left: 46px; }
.l2.has { padding-left: 32px; }
.l3 { padding-left: 60px; }
.tight { margin-left: -1px; }
.has .tri { margin-right: 1px; }
.has .side { margin-right: 2px; }
.selected { background: #adadad; }
.scrollbar { width: 14px; background: #b3b3b3; border-left: 1px solid #a5a5a5; border-right: 1px solid #8d8d8d; display: flex; flex-direction: column; align-items: center; padding: 6px 0; }
.thumb { width: 10px; height: 360px; border-radius: 5px; background: #909392; margin: 5px 0 auto; flex: none; }
.browser { flex: 1; display: flex; flex-direction: column; background: #bebebe; }
.crumbs { height: 21px; display: flex; align-items: center; background: #cecece; border-bottom: 1px solid #b0b0b0; padding-left: 4px; gap: 6px; letter-spacing: -0.050px; flex: none; }
.grid { flex: 1; display: grid; grid-template-columns: repeat(11, 90.350px); grid-auto-rows: 103px; padding: 10px 0 0 9px; }
.item { display: grid; grid-template-rows: 75px 14px; justify-items: center; align-items: center; font-size: 10px; line-height: 14px; letter-spacing: -0.080px; }
.doc { width: 66px; height: 74px; margin: -2px 0 0 0; }
.logo { width: 55px; height: 55px; margin: -6px 5px 0 0; color: #303030; }
.item .picked { background: #3870b2; color: #fff; border-radius: 3px; padding: 0 3px; font-size: 10.500px; }
.path { height: 21px; background: #cecece; border-top: 1px solid #b0b0b0; display: flex; align-items: center; padding: 0 16px 0 5px; gap: 3px; letter-spacing: -0.030px; flex: none; }
.path svg { color: #505050; }
.zoomer { margin-left: auto; }

/* inspector */
.inspector { width: 592px; }
.inspector .tab { width: 89px; gap: 5px; padding-left: 9px; }
.asset-head { height: 55px; background: #cacaca; border-bottom: 1px solid #858585; display: flex; padding: 12px 5px 0 10px; flex: none; }
.asset-icon { color: #505050; }
.asset-name { margin: -6px 0 0 12px; font-size: 13px; }
.asset-actions { margin-left: auto; display: flex; flex-direction: column; align-items: flex-end; gap: 10px; margin-top: -4px; color: #505050; }
.mini { display: flex; gap: 6px; margin-right: -2px; }
.open { width: 42px; height: 17px; border: 1px solid #aaa; border-radius: 3px; background: #e4e4e4; text-align: center; line-height: 16px; color: #161616; }
.inspector-body { flex: 1; }
.labels-title { height: 22px; border-top: 1px solid #939393; border-bottom: 1px solid #858585; background: #cacaca; font-weight: 700; padding: 3px 7px; }
.labels-body { height: 49px; background: #cacaca; padding: 3px 4px 0; }
.tag { margin-left: auto; }
.bundle { display: flex; align-items: center; gap: 6px; margin-top: 4px; }
.bundle > span:first-child { width: 86px; padding-top: 2px; }
.select { width: 111px; height: 17px; background: #dfdfdf; border: 1px solid #aaa; border-radius: 2px; display: flex; align-items: center; justify-content: space-between; padding: 0 5px 0 3px; }
.select.wide { width: 375px; }
.status { height: 22px; flex: none; text-align: right; padding: 4px 32px 0 0; background: #858585; letter-spacing: -0.080px; }

/* desktop taskbar */
.taskbar { height: 40px; flex: none; display: flex; background: linear-gradient(90deg, #321623 0, #351624 65%, #3d1b22 82%, #3b1822 100%); }
.app { width: 49px; display: flex; align-items: center; justify-content: center; }
.app.plain { width: 50px; padding-right: 2px; }
.app.run { background: linear-gradient(#ffb5a5, #ffb5a5) center bottom / 40px 2px no-repeat; }
.app.active { background: linear-gradient(#ffb5a5, #ffb5a5) center bottom / 48px 2px no-repeat, #5a4450; }
.rd { font: 700 9px "Open Sans", sans-serif; fill: #fff; }
.clock { margin-left: auto; padding: 3px 6px 0; display: flex; flex-direction: column; align-items: center; gap: 2px; color: #fff; font-family: "Noto Sans", sans-serif; letter-spacing: -0.500px; }
.cursor { position: absolute; left: 190px; top: 740px; }
```
